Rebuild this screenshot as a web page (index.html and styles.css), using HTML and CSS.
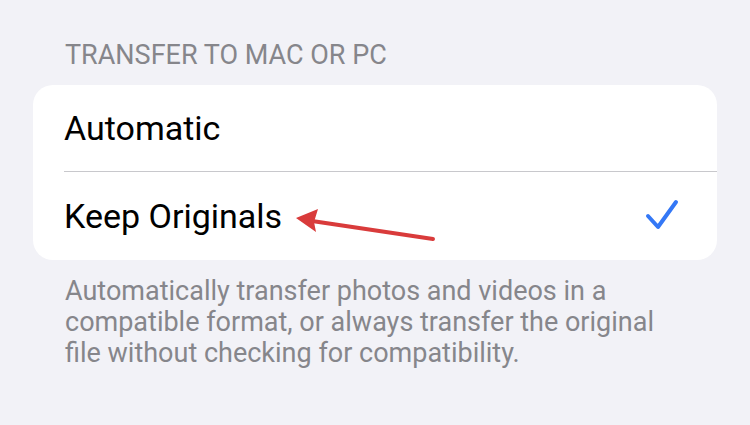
FILE: index.html
```html
<!DOCTYPE html>
<html lang="en">
<head>
    <meta charset="UTF-8">
    <meta name="viewport" content="width=device-width, initial-scale=1.0">
    <title>Transfer to Mac or PC</title>
    <link rel="stylesheet" href="styles.css">
</head>
<body>
    <div class="section">
        <div class="section-header">TRANSFER TO MAC OR PC</div>
        <div class="group">
            <div class="row">
                <div class="row-label">Automatic</div>
            </div>
            <div class="row selected">
                <div class="row-label">Keep Originals</div>
                <svg class="check" width="34" height="34" viewBox="0 0 34 34">
                    <path d="M3 17 L13 28 L31 3" fill="none" stroke="#3478f6" stroke-width="4" stroke-linecap="round" stroke-linejoin="round"/>
                </svg>
            </div>
        </div>
        <div class="section-footer">
            Automatically transfer photos and videos in a<br>
            compatible format, or always transfer the original<br>
            file without checking for compatibility.
        </div>
    </div>

    <!-- annotation arrow -->
    <svg class="arrow" width="750" height="425" viewBox="0 0 750 425">
        <line x1="433" y1="239" x2="312" y2="221" stroke="#d93b3b" stroke-width="4" stroke-linecap="round"/>
        <path d="M296 218 L318 209 L314 222 L316 232 Z" fill="#d93b3b"/>
    </svg>
</body>
</html>
```

FILE: styles.css
```css
* {
    margin: 0;
    padding: 0;
    box-sizing: border-box;
    font-family: 'Roboto', 'Liberation Sans', sans-serif;
}
body {
    background-color: #f2f2f7;
    width: 750px;
    height: 425px;
    overflow: hidden;
}
.section {
    padding: 40px 33px 0 33px;
}
.section-header {
    padding-left: 32px;
    font-size: 27px;
    color: #86868b;
    height: 45px;
    line-height: 30px;
}
.group {
    background-color: #ffffff;
    border-radius: 20px;
    overflow: hidden;
}
.row {
    display: flex;
    align-items: center;
    justify-content: space-between;
    height: 87px;
    margin-left: 31px;
    padding-right: 38px;
    border-bottom: 1px solid #c8c8cc;
}
.row:last-child {
    border-bottom: none;
    height: 88px;
}
.row-label {
    font-size: 34px;
    color: #000;
}
.check {
    display: block;
}
.section-footer {
    padding: 16px 0 0 32px;
    font-size: 27px;
    line-height: 31px;
    color: #86868b;
}
.arrow {
    position: absolute;
    left: 0;
    top: 0;
}
```
